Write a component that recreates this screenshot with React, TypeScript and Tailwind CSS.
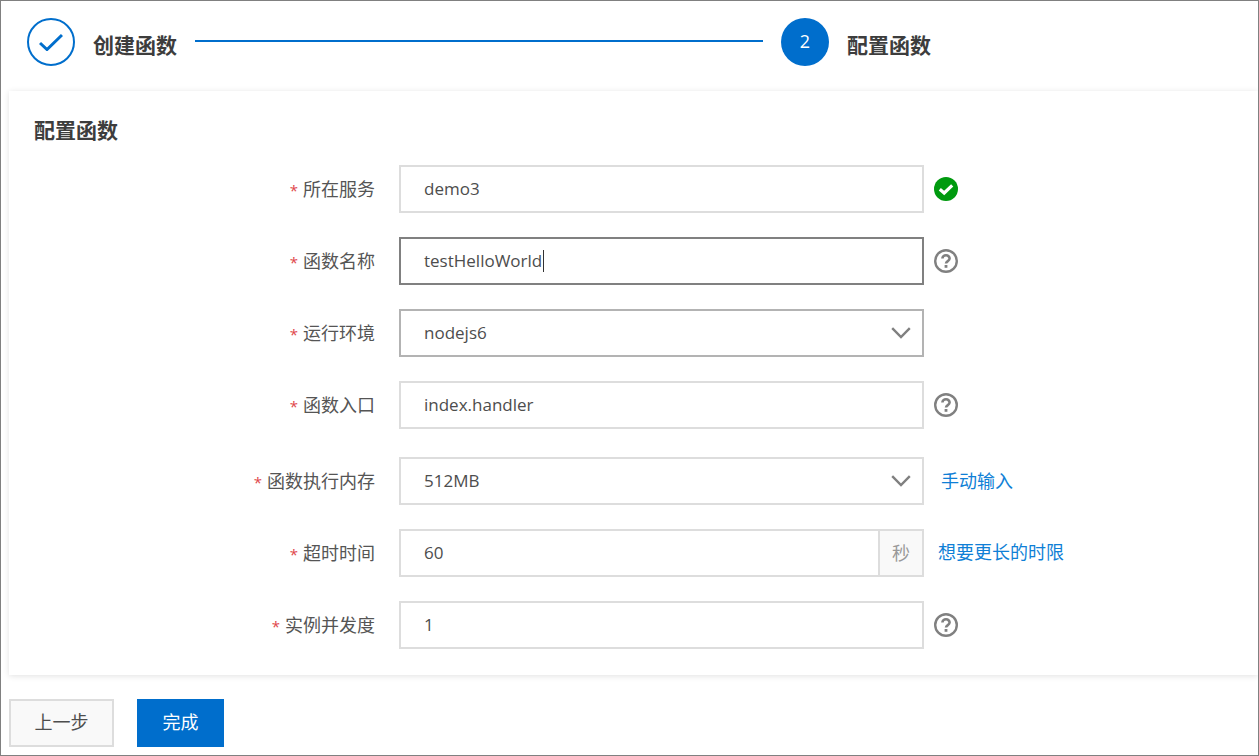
import type { ReactNode } from 'react';

const font = 'font-["Open_Sans","Noto_Sans_CJK_SC",sans-serif]';

const HelpIcon = () => (
  <svg width="24" height="24" viewBox="0 0 24 24" fill="none" className="shrink-0">
    <circle cx="12" cy="12" r="10.8" stroke="#808080" strokeWidth="2.4" />
    <path d="M8.4 9.6a3.6 3.4 0 0 1 7.2 0c0 2.5-3.6 2.5-3.6 5" stroke="#808080" strokeWidth="2.6" />
    <rect x="10.6" y="16" width="2.8" height="2.8" fill="#808080" />
  </svg>
);

const OkIcon = () => (
  <svg width="24" height="24" viewBox="0 0 24 24" fill="none" className="shrink-0">
    <circle cx="12" cy="12" r="12" fill="#009a0f" />
    <path d="M5.8 12.2l4.4 3.8 8-7.6" stroke="#fff" strokeWidth="3.2" />
  </svg>
);

const Chevron = () => (
  <svg width="20" height="12" viewBox="0 0 20 12" fill="none" className="shrink-0">
    <path d="M1.2 1.2L10 10l8.8-8.8" stroke="#808080" strokeWidth="2.4" />
  </svg>
);

interface RowProps {
  label: string;
  children: ReactNode;
  after?: ReactNode;
  className?: string;
}

const Row = ({ label, children, after, className = '' }: RowProps) => (
  <div className={`flex h-12 items-center ${className}`}>
    <div className="w-[366px] shrink-0 text-right text-lg text-[#555555]">
      <span className="mr-[5px] text-[15px] text-[#e0454a]">*</span>
      {label}
    </div>
    <div className="ml-6 w-[525px] shrink-0">{children}</div>
    {after}
  </div>
);

const Box = ({ value, border = 'border-[#dddddd]', select, cursor }: { value: string; border?: string; select?: boolean; cursor?: boolean }) => (
  <div className={`flex h-12 items-center justify-between border-2 pl-[23px] pr-[11px] text-[17px] text-[#4d4d4d] ${border}`}>
    <span className="flex items-center">
      {value}
      {cursor && <span className="ml-px h-[22px] w-px bg-[#333333]" />}
    </span>
    {select && <Chevron />}
  </div>
);

const Help = () => (
  <div className="ml-[10px]">
    <HelpIcon />
  </div>
);

export default function App() {
  return (
    <div className={`${font} h-[756px] w-[1259px] overflow-hidden border border-[#808080] bg-white`}>
      <div className="flex h-[90px] items-start pl-[26px] pt-[17px]">
        <div className="flex h-12 w-12 shrink-0 items-center justify-center rounded-full border-2 border-[#006ecc]">
          <svg width="24" height="18" viewBox="0 0 24 18" fill="none">
            <path d="M1 10l7 6.5L23 2" stroke="#006ecc" strokeWidth="3" />
          </svg>
        </div>
        <div className="ml-[18px] mt-[9px] text-[21px] leading-[36px] font-bold text-[#3d3d3d]">创建函数</div>
        <div className="ml-[18px] mt-[22px] h-0.5 w-[568px] bg-[#006ecc]" />
        <div className="ml-[18px] flex h-12 w-12 shrink-0 items-center justify-center rounded-full bg-[#006ecc] pb-0.5 text-lg text-white">
          2
        </div>
        <div className="ml-[18px] mt-[9px] text-[21px] leading-[36px] font-bold text-[#3d3d3d]">配置函数</div>
      </div>

      <div className="ml-2 h-[584px] bg-white shadow-[0_1px_6px_rgba(0,0,0,0.12)]">
        <div className="pl-[25px] pt-[21px] text-[21px] leading-9 font-bold text-[#3d3d3d]">配置函数</div>
        <div className="mt-[17px] flex flex-col gap-6">
          <Row
            label="所在服务"
            after={
              <div className="ml-[10px]">
                <OkIcon />
              </div>
            }
          >
            <Box value="demo3" />
          </Row>
          <Row label="函数名称" after={<Help />}>
            <Box value="testHelloWorld" border="border-[#808080]" cursor />
          </Row>
          <Row label="运行环境">
            <Box value="nodejs6" border="border-[#b3b3b3]" select />
          </Row>
          <Row label="函数入口" after={<Help />}>
            <Box value="index.handler" />
          </Row>
          <Row
            label="函数执行内存"
            className="mt-1"
            after={<a className="ml-[17px] text-lg text-[#0f7fd6]">手动输入</a>}
          >
            <Box value="512MB" select />
          </Row>
          <Row label="超时时间" after={<a className="ml-[14px] -mt-0.5 text-lg text-[#0f7fd6]">想要更长的时限</a>}>
            <div className="flex h-12 border-2 border-[#dddddd] text-[17px]">
              <div className="flex flex-1 items-center pl-[23px] text-[#4d4d4d]">60</div>
              <div className="flex w-[44px] items-center justify-center border-l-2 border-[#dddddd] bg-[#f9f9f9] text-lg text-[#999999]">
                秒
              </div>
            </div>
          </Row>
          <Row label="实例并发度" after={<Help />}>
            <Box value="1" />
          </Row>
        </div>
      </div>

      <div className="ml-2 mt-6 flex gap-[23px]">
        <button className="h-12 w-[105px] border-2 border-[#dddddd] bg-[#f9f9f9] pb-0.5 text-lg text-[#4d4d4d]">上一步</button>
        <button className="h-12 w-[87px] bg-[#006ecc] pb-0.5 text-lg text-white">完成</button>
      </div>
    </div>
  );
}
